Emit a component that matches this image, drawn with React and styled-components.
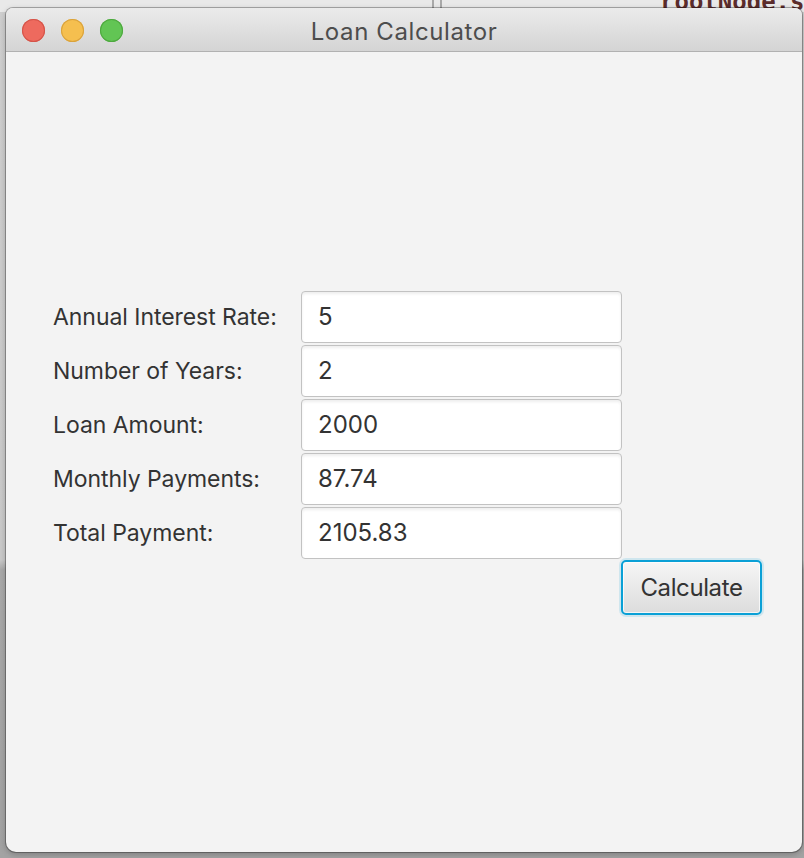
import styled, { createGlobalStyle } from "styled-components";

const GlobalStyle = createGlobalStyle`
  html, body {
    margin: 0;
    padding: 0;
  }
  body {
    background: #c4c4c4;
    font-family: Inter, "Liberation Sans", sans-serif;
    overflow: hidden;
  }
`;

const fields = [
  { label: "Annual Interest Rate:", value: "5" },
  { label: "Number of Years:", value: "2" },
  { label: "Loan Amount:", value: "2000" },
  { label: "Monthly Payments:", value: "87.74" },
  { label: "Total Payment:", value: "2105.83" },
];

const App = () => {
  return (
    <>
      <GlobalStyle />
      <Desktop>
        <TopStrip>
          <Divider />
          <Divider />
          <CodeText>rootNode.se</CodeText>
        </TopStrip>
        <Window>
          <TitleBar>
            <Lights>
              <Light color="#ee6a5e" edge="#d45449" />
              <Light color="#f5bf4f" edge="#d9a23c" />
              <Light color="#62c554" edge="#4ea83f" />
            </Lights>
            <Title>Loan Calculator</Title>
          </TitleBar>
          <Content>
            <Form>
              {fields.map((f) => (
                <Row key={f.label}>
                  <Label>{f.label}</Label>
                  <Field readOnly value={f.value} />
                </Row>
              ))}
              <ButtonRow>
                <Button>Calculate</Button>
              </ButtonRow>
            </Form>
          </Content>
        </Window>
      </Desktop>
    </>
  );
};

const Desktop = styled.div`
  position: relative;
  width: 804px;
  height: 858px;
  padding: 8px 0 0 6px;
  box-sizing: border-box;
  background: linear-gradient(
    to bottom,
    #cfcfcf 0px,
    #c9c9c9 560px,
    #a9a9a9 570px,
    #a3a3a3 858px
  );
`;

const TopStrip = styled.div`
  position: absolute;
  top: 0;
  left: 0;
  right: 0;
  height: 12px;
  background: #e9e9e9;
  overflow: hidden;
  display: flex;
  gap: 6px;
  padding-left: 432px;
`;

const Divider = styled.div`
  width: 2px;
  height: 12px;
  background: #a9a9a9;
`;

const CodeText = styled.span`
  position: absolute;
  left: 660px;
  top: -12px;
  font-family: "DejaVu Sans Mono", monospace;
  font-weight: bold;
  font-size: 24px;
  color: #5b2c2c;
`;

const Window = styled.div`
  position: relative;
  width: 796px;
  height: 844px;
  border-radius: 7px 7px 10px 10px;
  overflow: hidden;
  background: #f3f3f3;
  box-shadow: 0 0 0 1px rgba(0, 0, 0, 0.28), 0 2px 6px rgba(0, 0, 0, 0.25);
  display: flex;
  flex-direction: column;
`;

const TitleBar = styled.div`
  position: relative;
  height: 43px;
  flex: none;
  display: flex;
  align-items: center;
  justify-content: center;
  background: linear-gradient(to bottom, #ebebeb, #d4d4d4);
  border-bottom: 1px solid #b1b1b1;
`;

const Lights = styled.div`
  position: absolute;
  left: 16px;
  top: 11px;
  display: flex;
  gap: 16px;
`;

const Light = styled.span`
  width: 23px;
  height: 23px;
  border-radius: 50%;
  background: ${(p) => p.color};
  box-shadow: inset 0 0 0 1px ${(p) => p.edge};
`;

const Title = styled.div`
  font-size: 24px;
  color: #4d4d4d;
  letter-spacing: 0.6px;
  padding-top: 3px;
`;

const Content = styled.div`
  flex: 1;
  display: flex;
  align-items: center;
  justify-content: center;
  padding-left: 7px;
`;

const Form = styled.div`
  display: flex;
  flex-direction: column;
  gap: 2px;
  padding-top: 1px;
`;

const Row = styled.div`
  display: flex;
  align-items: center;
  width: 569px;
  padding-right: 140px;
`;

const Label = styled.div`
  width: 248px;
  font-size: 23px;
  color: #333333;
  letter-spacing: -0.05px;
`;

const Field = styled.input`
  width: 321px;
  height: 52px;
  box-sizing: border-box;
  border: 1px solid #c2c2c2;
  border-radius: 4px;
  background: #ffffff;
  box-shadow: inset 0 2px 3px rgba(0, 0, 0, 0.07);
  padding: 0 0 0 16px;
  font-family: Inter, "Liberation Sans", sans-serif;
  font-size: 24px;
  color: #333333;
  outline: none;
`;

const ButtonRow = styled.div`
  display: flex;
  justify-content: flex-end;
  margin-top: -1px;
`;

const Button = styled.button`
  width: 141px;
  height: 55px;
  box-sizing: border-box;
  border: 2px solid #0aa0d6;
  border-radius: 5px;
  background: linear-gradient(to bottom, #f6f6f6, #dcdcdc);
  box-shadow: 0 0 0 2px rgba(10, 160, 214, 0.15),
    inset 0 0 0 1px rgba(255, 255, 255, 0.7);
  font-family: Inter, "Liberation Sans", sans-serif;
  font-size: 24px;
  color: #333333;
  letter-spacing: -0.4px;
  padding: 0;
`;

export default App;
